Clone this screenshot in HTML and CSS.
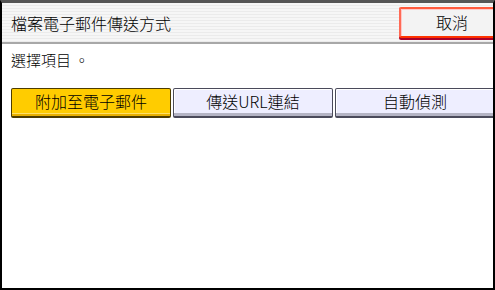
FILE: index.html
```html
<!DOCTYPE html>
<html>
  <head>
    <meta charset="utf-8" />
    <title>檔案電子郵件傳送方式</title>
    <link rel="stylesheet" href="styles.css">
  </head>
  <body>
    <div class="screen">
      <div class="header">
        <span class="title">檔案電子郵件傳送方式</span>
        <button class="cancel">取消</button>
      </div>
      <p class="prompt">選擇項目 。</p>
      <div class="options">
        <button class="option selected">附加至電子郵件</button>
        <button class="option">傳送URL連結</button>
        <button class="option">自動偵測</button>
      </div>
    </div>
  </body>
</html>
```

FILE: styles.css
```css
body {
  margin: 0;
  font-family: "Noto Sans CJK TC", "Noto Sans", sans-serif;
  font-weight: 300;
  color: #000;
}
.screen {
  box-sizing: border-box;
  width: 495px;
  height: 290px;
  border-top: 3px solid #555;
  border-left: 2px solid #000;
  border-right: 2px solid #000;
  border-bottom: 2px solid #000;
  overflow: hidden;
  background: #fff;
}
.header {
  display: flex;
  align-items: center;
  height: 39px;
  padding-left: 9px;
  border-bottom: 2px solid #a8a8a8;
  background: repeating-linear-gradient(#f6f6f6 0 2px, #ebebeb 2px 3px);
}
.title {
  font-size: 16px;
  line-height: 16px;
}
.cancel {
  margin-left: auto;
  margin-right: -12px;
  width: 106px;
  height: 31px;
  box-sizing: border-box;
  font-family: inherit;
  font-weight: inherit;
  font-size: 16px;
  line-height: 16px;
  padding: 0 0 1px;
  background: #f3f3f3;
  border: 2px solid #ff3300;
  border-top-color: #ff5a3c;
  border-left-color: #ff6a55;
  box-shadow: 0 2px 0 #a8002a, inset 1px 1px 0 #ffc8c8;
  border-radius: 2px;
}
.prompt {
  margin: 0;
  padding: 8px 9px 0;
  font-size: 15px;
  line-height: 16px;
}
.options {
  display: flex;
  gap: 2px;
  margin-top: 20px;
  padding-left: 9px;
}
.option {
  flex: none;
  box-sizing: border-box;
  width: 160px;
  height: 30px;
  padding: 0 0 3px;
  font-family: inherit;
  font-weight: inherit;
  font-size: 16px;
  line-height: 16px;
  color: #000;
  background: #eeeeff;
  border: 1px solid #4a4a5a;
  border-bottom-width: 2px;
  border-radius: 2px;
  box-shadow: inset 0 -3px 0 #b4b4c4, inset 1px 1px 0 #fff;
}
.option.selected {
  background: #ffcc00;
  border-color: #4d3c00;
  box-shadow: inset 0 -2px 0 #e8b000, inset 0 -3px 0 #ffe066;
}
```
